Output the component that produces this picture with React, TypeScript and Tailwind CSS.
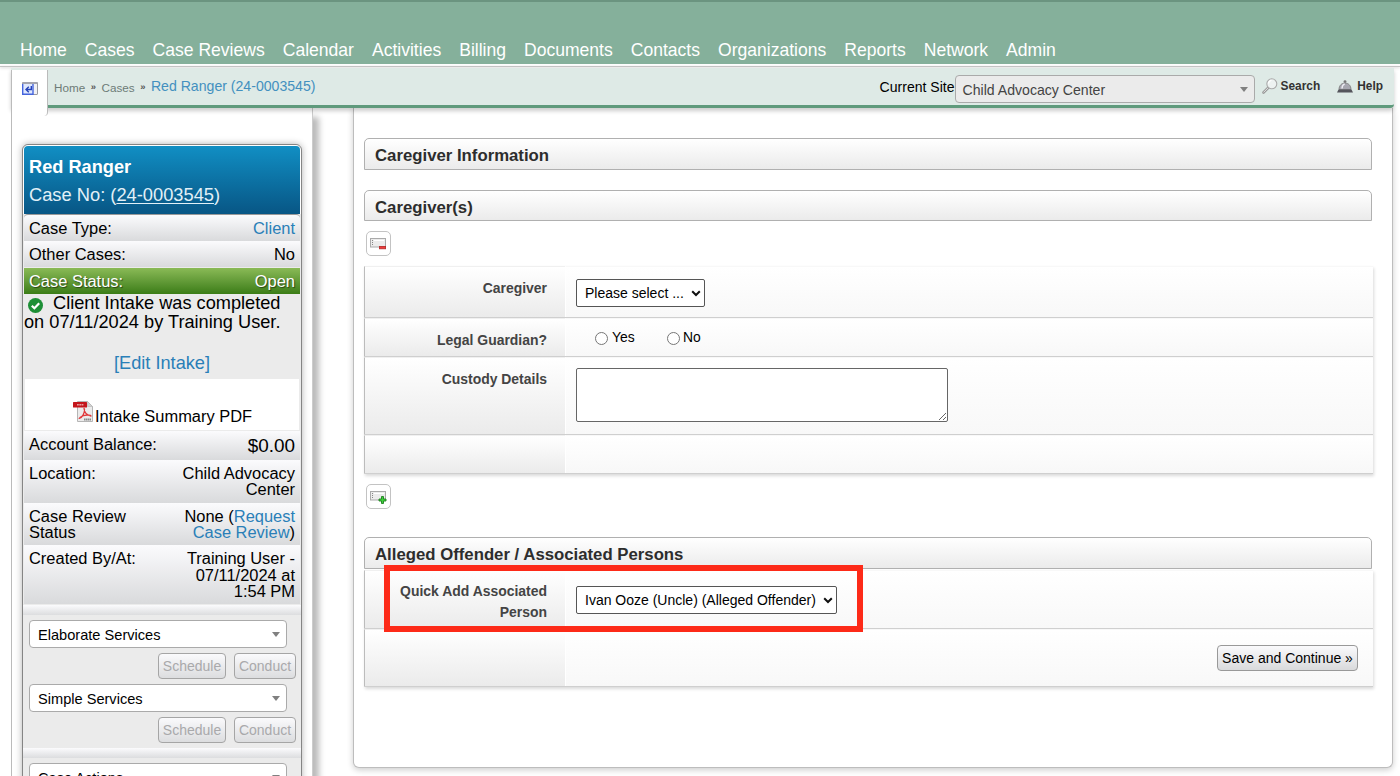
import React from 'react'

const navItems = [
  'Home',
  'Cases',
  'Case Reviews',
  'Calendar',
  'Activities',
  'Billing',
  'Documents',
  'Contacts',
  'Organizations',
  'Reports',
  'Network',
  'Admin',
]

function Caret() {
  return (
    <svg width="8" height="5" viewBox="0 0 8 5" className="shrink-0">
      <path d="M0 0h8L4 5z" fill="#808080" />
    </svg>
  )
}

function Chevron() {
  return (
    <svg width="10" height="7" viewBox="0 0 10 7" className="shrink-0">
      <path d="M1.2 1.2L5 5l3.8-3.8" fill="none" stroke="#111" strokeWidth="2" />
    </svg>
  )
}

function PanelIcon() {
  return (
    <svg width="16" height="13" viewBox="0 0 16 13">
      <rect x="0.5" y="0.5" width="15" height="12" rx="0.5" fill="#f1f1f5" stroke="#9a9aa0" />
      <rect x="0.5" y="0" width="15" height="2" fill="#a4a4ae" />
      <path d="M0.7 2v10.3H11V2" fill="#dfe8fd" stroke="#4464dd" strokeWidth="1.4" />
      <path d="M9.3 4v3.5H4.5M6.800 4.700L4 7.500l2.800 2.800" fill="none" stroke="#2643b8" strokeWidth="1.400" />
    </svg>
  )
}

function SearchIcon() {
  return (
    <svg width="16" height="16" viewBox="0 0 16 16">
      <path d="M1.5 14.500l5-5" stroke="#999" strokeWidth="2.6" strokeLinecap="round" />
      <path d="M1.7 14.2l4.600-4.600" stroke="#e3e3e3" strokeWidth="1" strokeLinecap="round" />
      <circle cx="9.8" cy="5.8" r="5" fill="#edf2f1" stroke="#aaa" strokeWidth="1.1" />
      <path d="M6.5 5.5a3.3 3.3 0 0 1 3-3" fill="none" stroke="#fff" strokeWidth="1.2" />
    </svg>
  )
}

function BellIcon() {
  return (
    <svg width="16" height="13" viewBox="0 0 16 13">
      <circle cx="8" cy="1.6" r="1.4" fill="#777" />
      <path d="M2 9.5C2 5.5 4.7 3 8 3s6 2.5 6 6.5z" fill="#a7a7b0" stroke="#777" strokeWidth="0.8" />
      <path d="M5 8.5c0-2.3 1-4 2.7-4.7" fill="none" stroke="#ececf2" strokeWidth="1.4" />
      <path d="M1.5 9.5h13l1.500 3H0z" fill="#55555c" />
    </svg>
  )
}

function PdfIcon() {
  return (
    <svg width="20" height="21" viewBox="0 0 20 21" className="shrink-0">
      <path d="M4.500 0.500h10l5 5v15h-15z" fill="#ececec" stroke="#b5b5b5" />
      <path d="M14.500 0.500v5h5z" fill="#d2d2d2" stroke="#b5b5b5" strokeWidth="0.6" />
      <rect x="0" y="1" width="14" height="5.500" rx="0.5" fill="#c4161c" />
      <path d="M4 3.700h6.500" stroke="#e9a0a2" strokeWidth="1.600" strokeDasharray="1.800 0.500" />
      <path
        d="M11 7.500c.5 4.500 3 6.800 7 7.500M11.500 8c.2 4-2 8.500-5.300 9.300M7 16.500c2.500-2.200 6.500-2.900 10.500-2.200"
        fill="none"
        stroke="#e0393c"
        strokeWidth="1.300"
        strokeLinecap="round"
      />
      <path d="M11 18.500h7" stroke="#8a8a8a" strokeWidth="2" strokeDasharray="1.600 0.400" />
    </svg>
  )
}

function CheckIcon() {
  return (
    <svg width="15" height="15" viewBox="0 0 15 15" className="inline-block">
      <circle cx="7.5" cy="7.5" r="7.5" fill="#1d8f36" />
      <path d="M3.8 7.7l2.600 2.600 4.800-5" fill="none" stroke="#fff" strokeWidth="2.2" />
    </svg>
  )
}

function RowButton({ add = false }) {
  return (
    <button className="flex h-[25px] w-[25px] items-center justify-center rounded-[5px] border border-[#c3c3c3] bg-white">
      <svg width="17" height="14" viewBox="0 0 17 14">
        <rect x="0.5" y="1.5" width="15" height="8.5" fill="#ececec" stroke="#aaa" />
        <path d="M2.5 3v6" stroke="#888" strokeDasharray="1 1" />
        <path d="M4 3.5h10" stroke="#fff" />
        {add ? (
          <path d="M11.5 6.5h2V9H16v2h-2.500v2.500h-2V11H9V9h2.500z" fill="#3ed13a" stroke="#1d7f1f" strokeWidth="0.9" />
        ) : (
          <rect x="9.4" y="9.4" width="6.2" height="2.4" fill="#ee3b3b" stroke="#b52a2a" strokeWidth="0.8" />
        )}
      </svg>
    </button>
  )
}

function SideRow({ label, className = '', children }: { label: string; className?: string; children: React.ReactNode }) {
  return (
    <div
      className={`flex justify-between bg-linear-to-b from-[#fbfbfd] to-[#d9dadc] px-[5px] pt-[5px] text-[16.45px] leading-4 ${className}`}
    >
      <span className="w-[120px] whitespace-nowrap">{label}</span>
      <span className="w-[125px] text-right">{children}</span>
    </div>
  )
}

function ServiceSelect({ name }: { name: string }) {
  return (
    <div className="ml-[5px] flex h-7 w-[258px] items-center justify-between rounded border border-[#aaa] bg-white pr-1.5 pl-2 text-[14.6px]">
      <span className="pt-[3px]">{name}</span>
      <Caret />
    </div>
  )
}

function Services({ name }: { name: string }) {
  return (
    <div className="h-16">
      <ServiceSelect name={name} />
      <div className="mt-[5px] mr-1 flex justify-end gap-2 text-[14px] text-[#a9a9ab]">
        <button className="h-[26px] w-[68px] rounded border border-[#a5a5a5] bg-linear-to-b from-[#fafafc] to-[#dcdddf]">
          Schedule
        </button>
        <button className="h-[26px] w-[62px] rounded border border-[#a5a5a5] bg-linear-to-b from-[#fafafc] to-[#dcdddf]">
          Conduct
        </button>
      </div>
    </div>
  )
}

function SectionTitle({ className = '', children }: { className?: string; children: React.ReactNode }) {
  return (
    <h2
      className={`w-[1008px] rounded-t-[5px] border border-[#b0b0b0] bg-linear-to-b from-white to-[#ebebeb] pl-2.5 text-[16.75px] leading-[33px] font-bold text-[#2d2d2d] ${className}`}
    >
      {children}
    </h2>
  )
}

function FormRow({ label = '', className = '', children }: { label?: string; className?: string; children?: React.ReactNode }) {
  return (
    <div className={`flex border-b border-[#cfcfcf] ${className}`}>
      <div className="w-[201px] border-t border-l border-t-[#f0f0f0] border-l-[#bcbcbc] bg-linear-to-b from-white to-[#ebebeb] pt-[11px] pr-[18px] pl-5 text-right text-[13.95px] leading-[21px] font-bold text-[#444]">
        {label}
      </div>
      <div className="flex-1 border-t border-l border-t-[#f8f8f8] border-l-white bg-linear-to-b from-white to-[#f8f8f8] pl-2.5">
        {children}
      </div>
    </div>
  )
}

function Sidebar() {
  return (
    <aside className="-ml-px h-[668px] w-[302px] border-x border-l-[#bbb] border-r-[#ccc] bg-white pt-9 pl-2.5 shadow-[7px_8px_6px_-1px_rgba(0,0,0,0.27)]">
      <div className="h-[680px] w-[280px] rounded-t-md border border-[#858585] bg-[#ebebeb] shadow-[0_0_7px_rgba(0,0,0,0.3)]">
        <div className="rounded-t-md border border-b-0 border-white">
          <div className="h-[68px] rounded-t bg-linear-to-b from-[#118fc4] to-[#085685] px-[5px] pt-[7px] text-white">
            <h3 className="text-[18.2px] leading-7 font-bold">Red Ranger</h3>
            <p className="text-[18.3px] leading-7 text-[#e2f0f7]">
              Case No: (<span className="underline underline-offset-2">24-0003545</span>)
            </p>
          </div>
        </div>
        <div className="px-px">
          <SideRow label="Case Type:" className="h-[27px] rounded-t border-t border-[#999]">
            <span className="text-[#2a7fb8]">Client</span>
          </SideRow>
          <SideRow label="Other Cases:" className="h-[26px]">No</SideRow>
          <div className="mt-px flex h-[26px] items-center justify-between bg-linear-to-b from-[#8aba56] to-[#3b7d16] px-[5px] text-[16.45px] text-white [text-shadow:1px_1px_1px_rgba(0,0,0,0.5)]">
            <span>Case Status:</span>
            <span>Open</span>
          </div>
          <div className="h-[85px] text-[18.2px] leading-[19px]">
            <p className="flex h-[19px] items-center whitespace-nowrap">
              <span className="mt-[3px] mr-2.5 ml-1 flex"><CheckIcon /></span>
              <span>Client Intake was completed</span>
            </p>
            <p className="whitespace-nowrap">on 07/11/2024 by Training User.</p>
            <p className="mt-[22px] text-center text-[#2a7fb8]">[Edit Intake]</p>
          </div>
          <div className="mx-px flex h-[51px] items-end bg-white pl-12 text-[16.45px]">
            <span className="mb-2"><PdfIcon /></span>
            <span className="mb-px ml-0.5">Intake Summary PDF</span>
          </div>
          <SideRow label="Account Balance:" className="mt-px h-[29px]">
            <span className="inline-block pt-px text-[18.9px] leading-[18px]">$0.00</span>
          </SideRow>
          <SideRow label="Location:" className="h-[43px]">Child Advocacy Center</SideRow>
          <div className="flex h-[42px] justify-between bg-linear-to-b from-[#fbfbfd] to-[#d9dadc] px-[5px] pt-[5px] text-[16.45px] leading-4">
            <span className="w-[105px]">Case Review Status</span>
            <span className="w-[125px] text-right">
              None (<span className="text-[#2a7fb8]">Request Case Review</span>)
            </span>
          </div>
          <SideRow label="Created By/At:" className="h-[59px] leading-[16.5px]">
            Training User - 07/11/2024 at 1:54 PM
          </SideRow>
        </div>
        <div className="mt-px mb-[5px] h-2.5 bg-linear-to-b from-[#fbfbfd] to-[#dcdddf]" />
        <div className="px-px">
          <Services name="Elaborate Services" />
          <Services name="Simple Services" />
        </div>
        <div className="mb-[5px] h-2.5 bg-linear-to-b from-[#fbfbfd] to-[#dcdddf]" />
        <div className="px-px">
          <ServiceSelect name="Case Actions" />
        </div>
      </div>
    </aside>
  )
}

function App() {
  return (
    <div className="flex h-[776px] w-[1400px] flex-col overflow-hidden bg-white font-['Liberation_Sans',Arial,sans-serif] text-black">
      <nav className="flex h-16 shrink-0 items-end gap-[18px] border-t-2 border-[#6b9480] bg-[#85b09b] pb-0.5 pl-5 text-[17.56px] leading-6 whitespace-nowrap text-white">
        {navItems.map((item) => (
          <a key={item}>{item}</a>
        ))}
      </nav>
      <div className="mt-0.5 h-px shrink-0 bg-[#c3c3c3] shadow-[0_1px_3px_rgba(0,0,0,0.25)]" />
      <header className="relative z-10 mt-px mr-1.5 ml-[11px] flex h-10 shrink-0 items-start rounded-br border-b-3 border-[#5f9a7c] bg-[#deeae6] shadow-[0_3px_4px_rgba(0,0,0,0.2)]">
        <div className="mt-[2px] flex h-[46px] w-[37px] shrink-0 justify-center rounded-br border-r border-l border-[#bbb] bg-white pt-3">
          <PanelIcon />
        </div>
        <div className="flex h-[37px] flex-1 items-center pl-1.5 text-[11.7px] text-[#6d7b77]">
          <span className="pt-0.5">Home</span>
          <span className="mx-[5.5px] pt-px text-[9.5px] font-bold text-[#555]">»</span>
          <span className="pt-0.5">Cases</span>
          <span className="mx-[5.5px] pt-px text-[9.5px] font-bold text-[#555]">»</span>
          <span className="text-[14.1px] text-[#4390bf]">Red Ranger (24-0003545)</span>
        </div>
        <div className="flex items-start pr-[11px] whitespace-nowrap">
          <span className="pt-[9px] text-[14.05px] leading-5">Current Site</span>
          <div className="mt-[7px] flex h-7 w-[300px] items-center justify-between rounded border border-[#aaa] bg-[#ebebeb] pr-1.5 pl-[7px] text-[14.1px] text-[#444]">
            <span className="pt-[3px]">Child Advocacy Center</span>
            <Caret />
          </div>
          <div className="mt-2.5 ml-[7px] flex items-start text-[11.9px] leading-4 font-bold text-[#333]">
            <SearchIcon />
            <span className="ml-[3px]">Search</span>
            <span className="mt-0.5 mr-1 ml-[17px]"><BellIcon /></span>
            <span>Help</span>
          </div>
        </div>
      </header>
      <div className="flex pl-3">
        <Sidebar />
        <main className="ml-10 h-[660px] w-[1040px] rounded-b-md border border-t-0 border-[#bdbdbd] bg-white pt-[30px] pl-2.5 shadow-[0_2px_6px_rgba(0,0,0,0.2)]">
          <SectionTitle className="h-8">Caregiver Information</SectionTitle>
          <SectionTitle className="mt-5 h-[31px]">Caregiver(s)</SectionTitle>
          <div className="mt-2.5 ml-0.5"><RowButton /></div>
          <div className="mt-2.5 w-[1009px] shadow-[1px_2px_3px_rgba(0,0,0,0.15)]">
            <FormRow label="Caregiver" className="h-[52px]">
              <div className="mt-3 flex h-7 w-[129px] items-center justify-between rounded-xs border border-[#555] bg-white pr-[3px] pl-2 text-[14px]">
                <span>Please select ...</span>
                <Chevron />
              </div>
            </FormRow>
            <FormRow label="Legal Guardian?" className="h-[39px]">
              <div className="flex h-9 items-center pl-[19px] text-[13.9px]">
                <input type="radio" name="guardian" className="mt-0.5" />
                <span className="ml-1 w-[55px]">Yes</span>
                <input type="radio" name="guardian" className="mt-0.5" />
                <span className="ml-[3px]">No</span>
              </div>
            </FormRow>
            <FormRow label="Custody Details" className="h-[78px]">
              <textarea className="mt-2.5 block h-[54px] w-[372px] rounded-xs border border-[#666] bg-white" />
            </FormRow>
            <FormRow className="h-[39px]" />
          </div>
          <div className="mt-2.5 ml-0.5"><RowButton add /></div>
          <SectionTitle className="mt-7 h-8">Alleged Offender / Associated Persons</SectionTitle>
          <div className="relative mt-px w-[1009px] shadow-[1px_2px_3px_rgba(0,0,0,0.15)]">
            <FormRow label="Quick Add Associated Person" className="h-[59px] *:first:pt-2.5">
              <div className="mt-[15px] flex h-7 w-[261px] items-center justify-between rounded-xs border border-[#555] bg-white pr-[3px] pl-2 text-[14px]">
                <span>Ivan Ooze (Uncle) (Alleged Offender)</span>
                <Chevron />
              </div>
            </FormRow>
            <FormRow className="h-[58px]">
              <div className="flex justify-end pt-[15px] pr-[15px]">
                <button className="h-[26px] w-[141px] rounded border border-[#999] bg-linear-to-b from-[#fafafc] to-[#d9dadc] text-[14px] whitespace-nowrap">
                  Save and Continue »
                </button>
              </div>
            </FormRow>
            <div className="absolute -top-[5px] left-5 h-[67px] w-[479px] border-6 border-[#fd2a18]" />
          </div>
        </main>
      </div>
    </div>
  )
}

export default App
